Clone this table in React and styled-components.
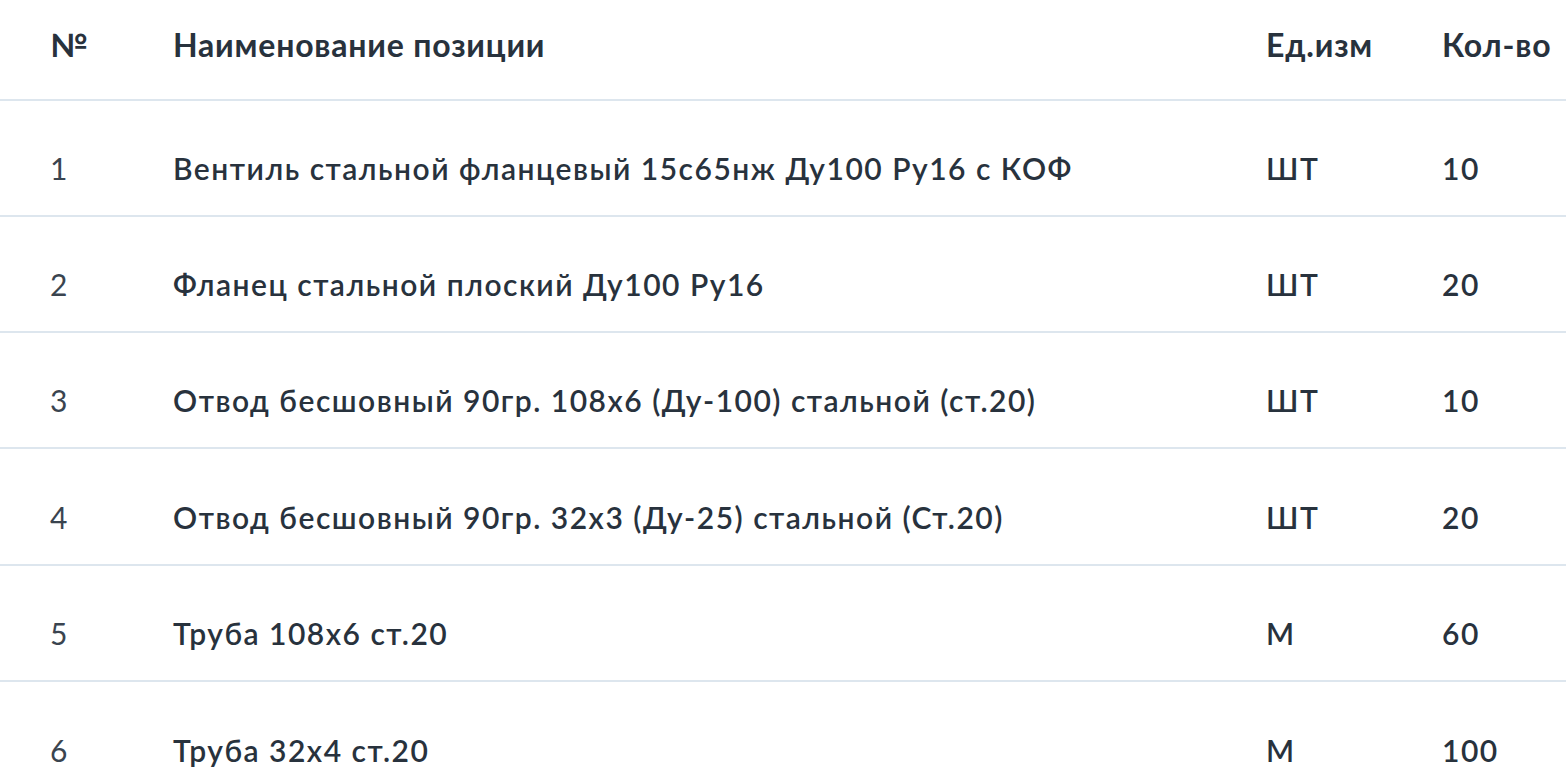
import React from 'react';
import styled, { createGlobalStyle } from 'styled-components';

const GlobalStyle = createGlobalStyle`
  body {
    margin: 0;
    background: #ffffff;
    font-family: "Lato", "Noto Sans", sans-serif;
    color: #28323d;
  }
`;

const TableWrap = styled('div')`
  width: 100%;
  overflow: hidden;
`;

const Row = styled('div')`
  display: grid;
  grid-template-columns: 123px 1093px 176px 1fr;
  align-items: center;
  box-sizing: border-box;
  padding-left: 50px;
  height: ${p => (p.$head ? '100.5px' : '116.3px')};
  padding-top: ${p => (p.$head ? '0' : '20px')};
  padding-bottom: ${p => (p.$head ? '10px' : '0')};
  border-bottom: 2px solid #dde6ee;

  &:last-child {
    border-bottom: none;
  }
`;

const HeadCell = styled('div')`
  font-size: 32px;
  font-weight: 700;
  letter-spacing: 0.8px;
  color: #28323d;
  white-space: nowrap;
`;

const Cell = styled('div')`
  font-size: 30px;
  font-weight: ${p => (p.$light ? 400 : 600)};
  letter-spacing: ${p => (p.$light ? '0' : '1.5px')};
  color: ${p => (p.$light ? '#3a444f' : '#28323d')};
  white-space: nowrap;
`;

const items = [
  { id: 1, name: 'Вентиль стальной фланцевый 15с65нж Ду100 Ру16 с КОФ', unit: 'ШТ', qty: 10 },
  { id: 2, name: 'Фланец стальной плоский Ду100 Ру16', unit: 'ШТ', qty: 20 },
  { id: 3, name: 'Отвод бесшовный 90гр. 108х6 (Ду-100) стальной (ст.20)', unit: 'ШТ', qty: 10 },
  { id: 4, name: 'Отвод бесшовный 90гр. 32х3 (Ду-25) стальной (Ст.20)', unit: 'ШТ', qty: 20 },
  { id: 5, name: 'Труба 108х6 ст.20', unit: 'М', qty: 60 },
  { id: 6, name: 'Труба 32х4 ст.20', unit: 'М', qty: 100 },
];

const App = () => {
  return (
    <>
      <GlobalStyle />
      <TableWrap>
        <Row $head>
          <HeadCell>№</HeadCell>
          <HeadCell>Наименование позиции</HeadCell>
          <HeadCell>Ед.изм</HeadCell>
          <HeadCell>Кол-во</HeadCell>
        </Row>
        {items.map(item => (
          <Row key={item.id}>
            <Cell $light>{item.id}</Cell>
            <Cell>{item.name}</Cell>
            <Cell>{item.unit}</Cell>
            <Cell>{item.qty}</Cell>
          </Row>
        ))}
      </TableWrap>
    </>
  );
};

export default App;
